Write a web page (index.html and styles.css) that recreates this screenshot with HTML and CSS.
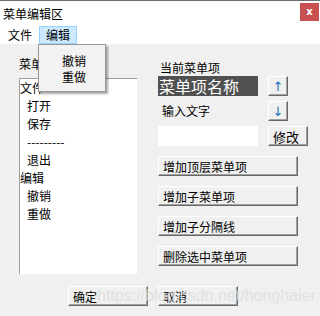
FILE: index.html
```html
<!DOCTYPE html>
<html lang="zh-CN">
<head>
  <meta charset="UTF-8">
  <title>菜单编辑区</title>
  <link rel="stylesheet" href="styles.css">
</head>
<body>
  <div class="window">
    <div class="titlebar">
      <span class="title">菜单编辑区</span>
      <span class="close">x</span>
    </div>
    <div class="menubar">
      <span class="menu-item">文件</span>
      <span class="menu-item active">编辑</span>
    </div>

    <div class="client">
      <div class="main">
        <div class="left-col">
          <div class="label">菜单项</div>
          <div class="listbox">
            <div class="item">文件</div>
            <div class="item sub">打开</div>
            <div class="item sub">保存</div>
            <div class="item sub">---------</div>
            <div class="item sub">退出</div>
            <div class="item">编辑</div>
            <div class="item sub">撤销</div>
            <div class="item sub">重做</div>
          </div>
        </div>

        <div class="right-col">
          <div class="label cur-label">当前菜单项</div>
          <div class="row">
            <div class="name-box">菜单项名称</div>
            <button class="btn arrow">↑</button>
          </div>
          <div class="row">
            <div class="input-label">输入文字</div>
            <button class="btn arrow">↓</button>
          </div>
          <div class="row">
            <input class="text-input" type="text">
            <button class="btn modify">修改</button>
          </div>
          <button class="btn wide">增加顶层菜单项</button>
          <button class="btn wide">增加子菜单项</button>
          <button class="btn wide">增加子分隔线</button>
          <button class="btn wide">删除选中菜单项</button>
        </div>
      </div>

      <div class="footer">
        <button class="btn footer-btn">确定</button>
        <button class="btn footer-btn">取消</button>
      </div>
    </div>

    <div class="dropdown">
      <div class="drop-item">撤销</div>
      <div class="drop-item">重做</div>
    </div>

    <div class="watermark">https://blog.csdn.net/honghaier</div>
  </div>
</body>
</html>
```

FILE: styles.css
```css
body {
  margin: 0;
  font-family: "Noto Sans CJK SC", "Noto Sans", sans-serif;
  font-size: 12px;
  color: #000;
  background: #f0f0f0;
}
.window {
  position: relative;
  width: 320px;
  height: 316px;
  overflow: hidden;
  background: #f0f0f0;
}
.titlebar {
  height: 25px;
  border-top: 1px solid #6e6e6e;
  background: #fff;
  display: flex;
  justify-content: space-between;
  align-items: flex-start;
}
.title {
  padding: 5px 0 0 3px;
  line-height: 16px;
}
.close {
  width: 19px;
  height: 18px;
  margin: 2px 1px 0 0;
  background: #c75050;
  color: #fff;
  font-family: "DejaVu Sans", sans-serif;
  font-weight: bold;
  font-size: 10px;
  line-height: 17px;
  text-align: center;
}
.menubar {
  height: 18px;
  background: #fff;
  display: flex;
}
.menu-item {
  line-height: 16px;
  padding: 0 6px 0 7px;
  border: 1px solid transparent;
}
.menu-item.active {
  background: #cce8ff;
  border-color: #99d1ff;
  padding: 0 6px;
}
.client {
  padding: 0 0 0 19px;
}
.main {
  display: flex;
  gap: 21px;
}
.left-col {
  width: 118px;
  padding-top: 11px;
}
.label {
  line-height: 18px;
}
.listbox {
  margin-top: 5px;
  height: 196px;
  background: #fff;
  border-left: 1px solid #a0a0a0;
  border-top: 1px solid #a0a0a0;
  box-sizing: border-box;
}
.item {
  line-height: 18px;
  height: 18px;
}
.item.sub {
  padding-left: 7px;
}
.right-col {
  width: 150px;
  padding-top: 15px;
  display: flex;
  flex-direction: column;
  align-items: flex-start;
}
.cur-label {
  line-height: 17px;
  padding-left: 2px;
}
.row {
  display: flex;
  gap: 10px;
  margin-bottom: 5px;
}
.name-box {
  width: 100px;
  height: 20px;
  background: #505050;
  color: #fff;
  font-size: 16px;
  line-height: 20px;
  padding-left: 1px;
  box-sizing: border-box;
  white-space: nowrap;
}
.input-label {
  width: 100px;
  line-height: 20px;
  padding-left: 4px;
  box-sizing: border-box;
}
.text-input {
  width: 100px;
  height: 20px;
  margin: 0;
  padding: 0;
  border: none;
  background: #fff;
  box-sizing: border-box;
}
.btn {
  margin: 0;
  height: 20px;
  padding: 0 0 0 4px;
  font-family: inherit;
  font-size: 12px;
  color: #000;
  text-align: left;
  background: #f0f0f0;
  border: 1px solid;
  border-color: #fff #696969 #696969 #fff;
  box-shadow: inset -1px -1px 0 #a0a0a0;
  box-sizing: border-box;
  line-height: 17px;
}
.arrow {
  width: 20px;
  padding: 0;
  text-align: center;
  color: #1e73be;
  font-family: "DejaVu Sans", sans-serif;
  font-size: 13px;
}
.modify {
  width: 40px;
  font-size: 13px;
}
.wide {
  width: 140px;
  margin-bottom: 10px;
}
.row + .wide {
  margin-top: 5px;
}
.footer {
  display: flex;
  gap: 10px;
  padding: 10px 0 0 49px;
}
.footer-btn {
  width: 80px;
}
.dropdown {
  position: absolute;
  left: 38px;
  top: 44px;
  width: 68px;
  height: 48px;
  padding-top: 8px;
  box-sizing: border-box;
  background: #f2f2f2;
  border: 1px solid #979797;
  box-shadow: 2px 2px 2px rgba(0, 0, 0, 0.35);
}
.drop-item {
  line-height: 16px;
  padding-left: 23px;
}
.watermark {
  position: absolute;
  left: 97px;
  top: 287px;
  font-family: "Liberation Sans", sans-serif;
  font-size: 16px;
  color: rgba(220, 220, 220, 0.8);
  white-space: nowrap;
}
```
